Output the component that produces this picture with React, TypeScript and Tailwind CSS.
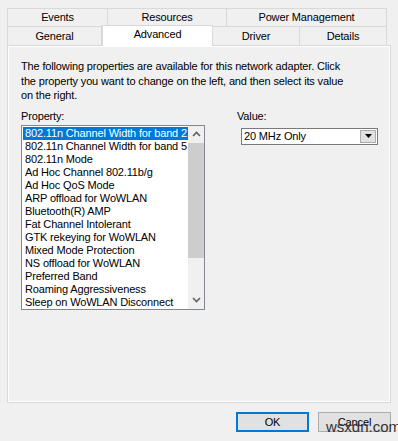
import React from "react";

const items = [
  "802.11n Channel Width for band 2.4GHz",
  "802.11n Channel Width for band 5.2GHz",
  "802.11n Mode",
  "Ad Hoc Channel 802.11b/g",
  "Ad Hoc QoS Mode",
  "ARP offload for WoWLAN",
  "Bluetooth(R) AMP",
  "Fat Channel Intolerant",
  "GTK rekeying for WoWLAN",
  "Mixed Mode Protection",
  "NS offload for WoWLAN",
  "Preferred Band",
  "Roaming Aggressiveness",
  "Sleep on WoWLAN Disconnect",
];

export default function App() {
  const font = { fontFamily: '"Liberation Sans", Arial, sans-serif' };
  return (
    <div
      className="w-[398px] h-[441px] bg-[#f0f0f0] text-black text-[11px] tracking-[-0.15px] overflow-hidden relative"
      style={font}
    >
      {/* tabs */}
      <div className="pt-[8px] pl-[7px]">
        <div className="flex h-[19px]">
          <div className="w-[101px] border border-[#d9d9d9] bg-[#f0f0f0] flex items-center justify-center">Events</div>
          <div className="w-[119px] border border-l-0 border-[#d9d9d9] bg-[#f0f0f0] flex items-center justify-center">Resources</div>
          <div className="w-[160px] border border-l-0 border-[#d9d9d9] bg-[#f0f0f0] flex items-center justify-center">Power Management</div>
        </div>
        <div className="flex h-[18px]">
          <div className="w-[95px] border border-t-0 border-b-0 border-[#d9d9d9] bg-[#f0f0f0] flex items-center justify-center">General</div>
          <div className="w-[111px] h-[21px] -mt-[2px] border border-b-0 border-[#d9d9d9] bg-white flex items-center justify-center pb-[3px] relative z-10">Advanced</div>
          <div className="w-[87px] border border-l-0 border-t-0 border-b-0 border-[#d9d9d9] bg-[#f0f0f0] flex items-center justify-center">Driver</div>
          <div className="w-[87px] border border-l-0 border-t-0 border-b-0 border-[#d9d9d9] bg-[#f0f0f0] flex items-center justify-center">Details</div>
        </div>
      </div>

      {/* panel */}
      <div className="ml-[7px] w-[384px] h-[358px] border border-[#d9d9d9] shadow-[inset_0_0_0_1px_#ffffff] bg-[#f0f0f0] pl-[13px] pt-[13px]">
        <p className="leading-[14.5px] whitespace-nowrap">
          The following properties are available for this network adapter. Click
          <br />
          the property you want to change on the left, and then select its value
          <br />
          on the right.
        </p>
        <div className="flex mt-[6px]">
          <div className="w-[216px]">
            <div className="leading-[14px]">Property:</div>
            <div className="mt-[2px] w-[184px] h-[185px] border border-[#828790] bg-white flex overflow-hidden">
              <div className="flex-1 pt-[1px] pl-[1px] overflow-hidden">
                {items.map((t, i) => (
                  <div
                    key={t}
                    className={
                      "h-[13px] leading-[13px] pl-[2px] whitespace-nowrap " +
                      (i === 0 ? "bg-[#0078d7] text-white" : "")
                    }
                  >
                    {t}
                  </div>
                ))}
              </div>
              <div className="w-[16px] bg-[#f0f0f0] flex flex-col">
                <div className="h-[17px] flex items-center justify-center">
                  <svg width="9" height="6" viewBox="0 0 9 6">
                    <path d="M1 5 L4.5 1.5 L8 5" stroke="#606060" strokeWidth="1.6" fill="none" />
                  </svg>
                </div>
                <div className="h-[115px] bg-[#cdcdcd]" />
                <div className="flex-1" />
                <div className="h-[17px] flex items-center justify-center">
                  <svg width="9" height="6" viewBox="0 0 9 6">
                    <path d="M1 1 L4.5 4.5 L8 1" stroke="#606060" strokeWidth="1.6" fill="none" />
                  </svg>
                </div>
              </div>
            </div>
          </div>
          <div>
            <div className="leading-[14px]">Value:</div>
            <div className="mt-[5px] ml-[4px] w-[137px] h-[17px] border border-[#7a7a7a] bg-white flex items-center pl-[2px] pr-[1px]">
              <span className="flex-1 leading-[14px]">20 MHz Only</span>
              <div className="w-[16px] h-[13px] border border-[#adadad] bg-[#e1e1e1] flex items-center justify-center">
                <svg width="7" height="4" viewBox="0 0 7 4">
                  <path d="M0 0 H7 L3.5 4 Z" fill="#000" />
                </svg>
              </div>
            </div>
          </div>
        </div>
      </div>

      {/* buttons */}
      <div className="flex justify-end gap-[9px] pr-[7px] mt-[9px]">
        <button className="w-[73px] h-[20px] border-2 border-[#0078d7] bg-[#e1e1e1] leading-[14px]">OK</button>
        <button className="w-[73px] h-[20px] border border-[#adadad] bg-[#e1e1e1] leading-[14px]">Cancel</button>
      </div>
      <div className="absolute left-[326px] top-[419px] text-[15px] tracking-normal leading-[16px] text-[#333]">wsxdn.com</div>
    </div>
  );
}
